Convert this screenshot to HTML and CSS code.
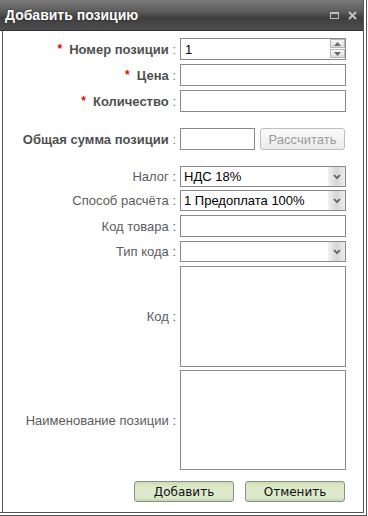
FILE: index.html
```html
<!DOCTYPE html>
<html lang="ru">
<head>
    <meta charset="UTF-8">
    <title>Добавить позицию</title>
    <link rel="stylesheet" href="styles.css">
</head>
<body>

    <div class="frame">
        <div class="window">
            <div class="titlebar">
                <span class="title">Добавить позицию</span>
                <span class="tools">
                    <svg width="9" height="7" viewBox="0 0 9 7"><rect x="0.5" y="0.5" width="8" height="6" fill="none" stroke="#b9c3cc"/><rect x="1" y="1" width="7" height="1" fill="#b9c3cc"/></svg>
                    <svg width="9" height="9" viewBox="0 0 9 9"><path d="M1 1 L8 8 M8 1 L1 8" stroke="#b9c3cc" stroke-width="2"/></svg>
                </span>
            </div>

            <div class="form">
                <div class="row">
                    <label class="lbl strong"><span class="star">*</span>Номер позиции <span class="colon">:</span></label>
                    <div class="field spin">
                        <input type="text" value="1">
                        <div class="spin-btns">
                            <div class="spin-btn"><svg width="7" height="4" viewBox="0 0 7 4"><path d="M0 4 L3.5 0 L7 4 Z" fill="#6a6a6a"/></svg></div>
                            <div class="spin-btn"><svg width="7" height="4" viewBox="0 0 7 4"><path d="M0 0 L3.5 4 L7 0 Z" fill="#6a6a6a"/></svg></div>
                        </div>
                    </div>
                </div>
                <div class="row">
                    <label class="lbl strong"><span class="star">*</span>Цена <span class="colon">:</span></label>
                    <div class="field"><input type="text"></div>
                </div>
                <div class="row">
                    <label class="lbl strong"><span class="star">*</span>Количество <span class="colon">:</span></label>
                    <div class="field"><input type="text"></div>
                </div>

                <div class="row spaced">
                    <label class="lbl strong">Общая сумма позиции <span class="colon">:</span></label>
                    <div class="field sum">
                        <input type="text" class="short">
                        <button class="calc-btn">Рассчитать</button>
                    </div>
                </div>

                <div class="row spaced select-row">
                    <label class="lbl">Налог :</label>
                    <div class="field combo"><span class="combo-text">НДС 18%</span><span class="combo-arrow"><svg width="8" height="6" viewBox="0 0 8 6"><path d="M1 1 L4 4 L7 1" fill="none" stroke="#555" stroke-width="1.6"/></svg></span></div>
                </div>
                <div class="row tight select-row">
                    <label class="lbl">Способ расчёта :</label>
                    <div class="field combo"><span class="combo-text">1 Предоплата 100%</span><span class="combo-arrow"><svg width="8" height="6" viewBox="0 0 8 6"><path d="M1 1 L4 4 L7 1" fill="none" stroke="#555" stroke-width="1.6"/></svg></span></div>
                </div>
                <div class="row">
                    <label class="lbl">Код товара :</label>
                    <div class="field"><input type="text"></div>
                </div>
                <div class="row select-row">
                    <label class="lbl">Тип кода :</label>
                    <div class="field combo"><span class="combo-text"></span><span class="combo-arrow"><svg width="8" height="6" viewBox="0 0 8 6"><path d="M1 1 L4 4 L7 1" fill="none" stroke="#555" stroke-width="1.6"/></svg></span></div>
                </div>
                <div class="row">
                    <label class="lbl">Код :</label>
                    <div class="field"><textarea class="code"></textarea></div>
                </div>
                <div class="row tight">
                    <label class="lbl">Наименование позиции :</label>
                    <div class="field"><textarea class="name"></textarea></div>
                </div>

                <div class="actions">
                    <button class="act-btn">Добавить</button>
                    <button class="act-btn">Отменить</button>
                </div>
            </div>
        </div>
    </div>

</body>
</html>
```

FILE: styles.css
```css
body {
    margin: 0;
    background-color: #fff;
    font-family: "Liberation Sans", Arial, sans-serif;
    font-size: 13px;
    width: 368px;
    height: 516px;
    overflow: hidden;
}
.frame {
    width: 367px;
    height: 516px;
    border-right: 4px double #555;
    border-bottom: 4px double #555;
    box-sizing: border-box;
}
.window {
    height: 100%;
    margin-left: 2px;
    border-left: 1px solid #555;
    box-sizing: border-box;
}
.titlebar {
    height: 31px;
    margin-left: -3px;
    display: flex;
    align-items: center;
    justify-content: space-between;
    padding: 0 6px 0 5px;
    background: linear-gradient(#7a7a7a, #5a5a5a 40%, #3f3f3f 60%, #4d4d4d);
    border-bottom: 1px solid #333;
    box-sizing: border-box;
}
.title {
    color: #fff;
    font-weight: bold;
    font-size: 14px;
    text-shadow: 0 0 2px #222;
}
.tools {
    display: flex;
    align-items: center;
    gap: 9px;
}
.form {
    display: flex;
    flex-direction: column;
    gap: 4px;
    padding-top: 7px;
}
.row {
    display: flex;
    align-items: center;
    gap: 4px;
}
.row.spaced {
    margin-top: 12px;
}
.row.tight {
    margin-top: -1px;
}
.lbl {
    width: 173px;
    text-align: right;
    color: #5c5c5c;
    white-space: nowrap;
}
.lbl.strong {
    font-weight: bold;
    color: #4f4f4f;
}
.colon {
    font-weight: normal;
    color: #777;
}
.star {
    color: #e00;
    font-size: 12px;
    margin-right: 7px;
    position: relative;
    top: -1px;
}
.field {
    width: 166px;
    position: relative;
}
.field input, .field textarea {
    display: block;
    width: 100%;
    height: 22px;
    margin: 0;
    padding: 1px 4px;
    border: 1px solid #8a8a8a;
    box-sizing: border-box;
    font-family: "Liberation Sans", Arial, sans-serif;
    font-size: 13px;
    color: #000;
    background: #fff;
    resize: none;
}
.spin-btns {
    position: absolute;
    right: 1px;
    top: 1px;
    display: flex;
    flex-direction: column;
    gap: 1px;
}
.spin-btn {
    width: 15px;
    height: 9px;
    display: flex;
    align-items: center;
    justify-content: center;
    background: linear-gradient(#f6f6f6, #d9dde1);
    border: 1px solid #b8b8b8;
    box-sizing: border-box;
}
.sum {
    display: flex;
    gap: 5px;
}
.sum .short {
    width: 75px;
}
.calc-btn {
    width: 85px;
    height: 22px;
    padding: 0;
    border: 1px solid #bdbdbd;
    border-radius: 3px;
    background: linear-gradient(#fafafa, #ececec);
    color: #9a9a9a;
    font-family: "Liberation Sans", Arial, sans-serif;
    font-size: 13px;
}
.combo {
    height: 21px;
    display: flex;
    align-items: center;
    justify-content: space-between;
    border: 1px solid #8a8a8a;
    box-sizing: border-box;
    background: #fff;
}
.combo-text {
    padding-left: 3px;
    color: #000;
}
.combo-arrow {
    width: 17px;
    height: 19px;
    display: flex;
    align-items: center;
    justify-content: center;
    background: linear-gradient(to right, #f2f2f2, #d6d6d6 50%, #ececec);
}
.code {
    height: 101px !important;
}
.name {
    height: 100px !important;
}
.actions {
    display: flex;
    justify-content: flex-end;
    gap: 11px;
    margin-top: 7px;
    padding-right: 18px;
}
.act-btn {
    width: 100px;
    height: 21px;
    padding: 0;
    border: 1px solid #8d8d8d;
    border-radius: 3px;
    background: linear-gradient(#c8dca8, #dbe8c8 20%, #dde9cf 80%, #c4d8a4);
    color: #111;
    font-family: "DejaVu Sans", Verdana, sans-serif;
    font-size: 12px;
}
```
